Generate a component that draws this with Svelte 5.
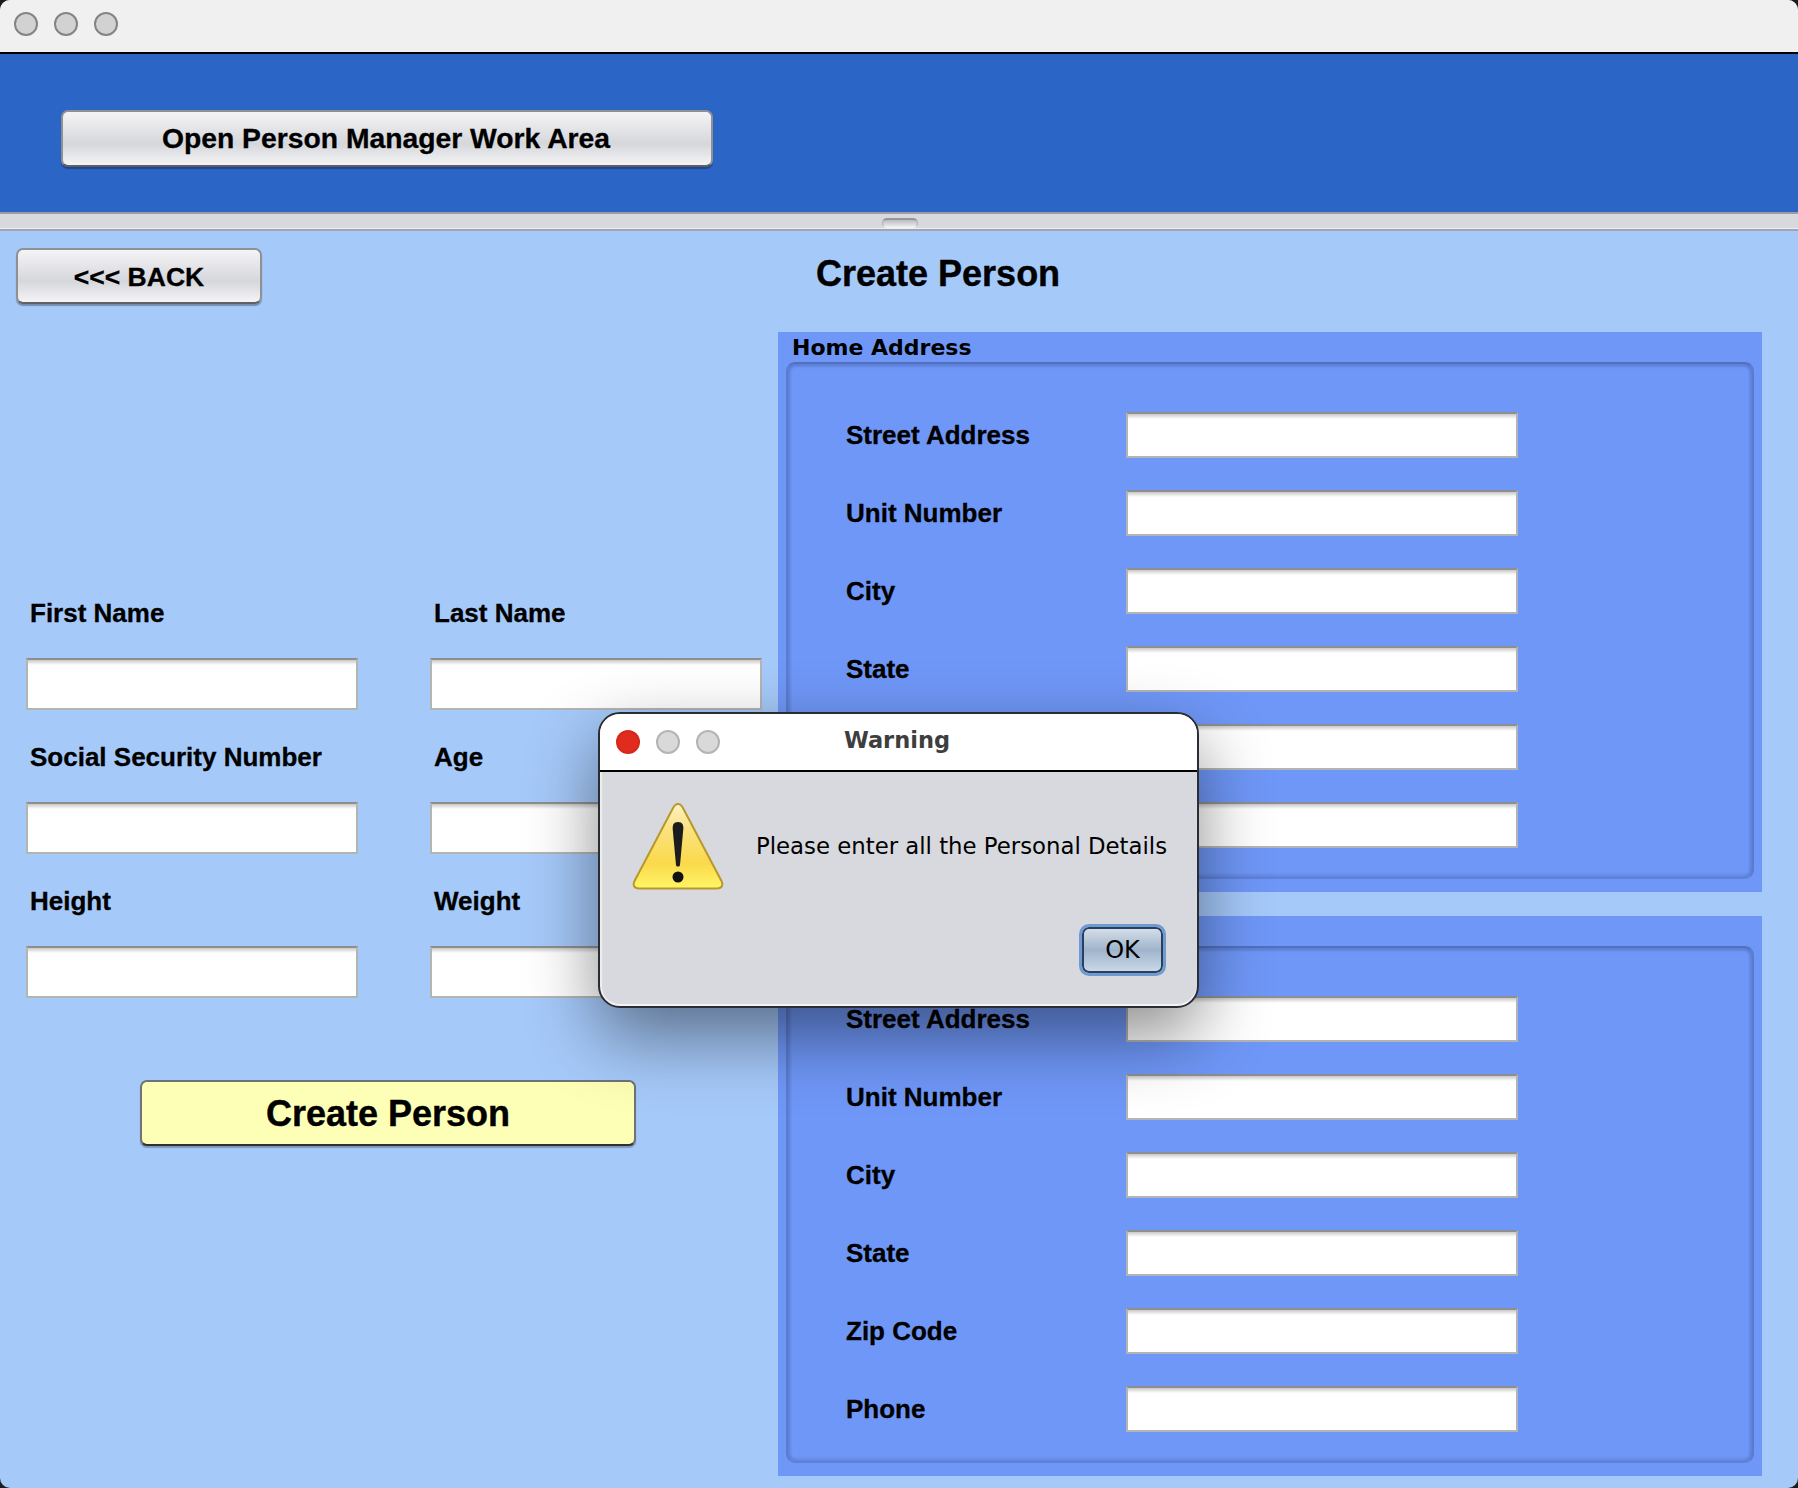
<script>
  const personal = [
    ['First Name', 'Last Name'],
    ['Social Security Number', 'Age'],
    ['Height', 'Weight']
  ];
  const panels = [
    { title: 'Home Address', rows: ['Street Address', 'Unit Number', 'City', 'State', 'Zip Code', 'Phone'] },
    { title: 'Work Address', rows: ['Street Address', 'Unit Number', 'City', 'State', 'Zip Code', 'Phone'] }
  ];
</script>

<div class="window">
  <div class="titlebar">
    <span class="light"></span>
    <span class="light"></span>
    <span class="light"></span>
  </div>

  <div class="header">
    <button class="btn open">Open Person Manager Work Area</button>
  </div>

  <div class="divider"><span class="grip"></span></div>

  <div class="content">
    <div class="left">
      <button class="btn back">&lt;&lt;&lt; BACK</button>
      <div class="form">
        {#each personal as row}
          {#each row as label}
            <div class="item">
              <span class="label">{label}</span>
              <div class="field"></div>
            </div>
          {/each}
        {/each}
      </div>
      <button class="create">Create Person</button>
    </div>

    <div class="right">
      <h1>Create Person</h1>
      {#each panels as panel}
        <section class="panel">
          <div class="legend">{panel.title}</div>
          <div class="inner">
            {#each panel.rows as row}
              <div class="row">
                <span class="label">{row}</span>
                <div class="field"></div>
              </div>
            {/each}
          </div>
        </section>
      {/each}
    </div>
  </div>

  <div class="dialog">
    <div class="dialog-title">
      <span class="light red"></span>
      <span class="light"></span>
      <span class="light"></span>
      <span class="dialog-name">Warning</span>
    </div>
    <div class="dialog-body">
      <svg class="warn" width="94" height="90" viewBox="0 0 94 90">
        <defs>
          <linearGradient id="warnFill" x1="0" y1="0" x2="0" y2="1">
            <stop offset="0" stop-color="#fdf2c4" />
            <stop offset="0.3" stop-color="#fbe27e" />
            <stop offset="0.7" stop-color="#fad94c" />
            <stop offset="1" stop-color="#fff666" />
          </linearGradient>
        </defs>
        <path d="M47 3 C44.500 3 43 4.800 41.500 8 L3.500 80 C1.500 84 3 87.500 8 87.500 L86 87.500 C91 87.500 92.500 84 90.500 80 L52.500 8 C51 4.800 49.500 3 47 3 Z" fill="url(#warnFill)" stroke="#b8982a" stroke-width="2" />
        <path d="M47 21 C42.500 21 41.500 24 41.700 28 L45 64 C45.200 66 48.800 66 49 64 L52.300 28 C52.500 24 51.500 21 47 21 Z" fill="#1c1c1c" />
        <circle cx="47" cy="76" r="5.500" fill="#111" />
      </svg>
      <span class="message">Please enter all the Personal Details</span>
    </div>
    <div class="dialog-actions">
      <button class="ok">OK</button>
    </div>
  </div>
</div>

<style>
  :global(body) {
    margin: 0;
    background: #1b1b1d;
  }
  .window {
    position: relative;
    width: 1798px;
    height: 1488px;
    overflow: hidden;
    display: flex;
    flex-direction: column;
    background: #a5c9f9;
    border-radius: 10px;
    font-family: "Liberation Sans", Arial, sans-serif;
    color: #000;
  }
  .titlebar {
    height: 40px;
    flex: none;
    display: flex;
    align-items: flex-start;
    gap: 16px;
    padding: 12px 0 0 14px;
    background: #f0f0f0;
    border-bottom: 2px solid #000;
  }
  .light {
    width: 24px;
    height: 24px;
    box-sizing: border-box;
    border-radius: 50%;
    background: #d2d2d2;
    border: 2px solid #848484;
  }
  .header {
    height: 158px;
    flex: none;
    box-sizing: border-box;
    padding: 56px 0 0 61px;
    background: #2b65c6;
  }
  .btn {
    display: block;
    box-sizing: border-box;
    padding: 0;
    font: bold 28.300px "Liberation Sans", Arial, sans-serif;
    -webkit-text-stroke: 0.3px #000;
    color: #000;
    border: 2px solid #8f9093;
    border-bottom-color: #5e6064;
    border-radius: 7px;
    background: linear-gradient(#f4f4f6, #d6d7db 60%, #f4f4f6);
    box-shadow: 0 2px 1px rgba(0, 0, 0, 0.3);
  }
  .open {
    width: 652px;
    height: 57px;
    padding-right: 2px;
  }
  .back {
    width: 246px;
    height: 56px;
    margin: 17px 0 0 16px;
    padding-top: 2px;
    font-size: 26.500px;
  }
  .divider {
    height: 19px;
    flex: none;
    box-sizing: border-box;
    display: flex;
    justify-content: center;
    background: #d8d9de;
    border-top: 2px solid #9a9ca2;
    border-bottom: 2px solid #a3a5aa;
    box-shadow: inset 0 -1px 0 #eceef0;
  }
  .grip {
    width: 36px;
    height: 10px;
    margin: 4px 0 0 2px;
    box-sizing: border-box;
    border: 1px solid #b0b2b7;
    border-top: 2px solid #94969c;
    border-bottom-color: #f3f4f6;
    border-radius: 5px;
    background: linear-gradient(#b9bbc0, #eceef0);
  }
  .content {
    flex: 1;
    display: grid;
    grid-template-columns: 778px 984px;
    align-items: start;
  }
  .left {
    display: flex;
    flex-direction: column;
  }
  .form {
    display: grid;
    grid-template-columns: 332px 332px;
    column-gap: 72px;
    row-gap: 32px;
    margin: 294px 0 0 26px;
  }
  .item {
    display: flex;
    flex-direction: column;
    gap: 30px;
  }
  .item .label {
    padding-left: 4px;
  }
  .label {
    font-size: 26px;
    font-weight: bold;
    line-height: 30px;
    -webkit-text-stroke: 0.3px #000;
  }
  .field {
    box-sizing: border-box;
    height: 52px;
    background: linear-gradient(#c9c9c9, #fff 5px);
    border: 2px solid #b4b4b4;
    border-top-color: #8e8e8e;
  }
  .create {
    width: 496px;
    height: 66px;
    margin: 82px 0 0 140px;
    padding: 2px 0 0;
    font: bold 36px "Liberation Sans", Arial, sans-serif;
    -webkit-text-stroke: 0.4px #000;
    color: #000;
    background: #feffb6;
    border: 2px solid #6f7278;
    border-bottom-color: #2e3034;
    border-radius: 7px;
    box-shadow: 0 2px 1px rgba(0, 0, 0, 0.25);
  }
  .right {
    display: flex;
    flex-direction: column;
    gap: 24px;
  }
  h1 {
    margin: 21px 0 12px 38px;
    font-size: 36px;
    line-height: 44px;
    font-weight: bold;
    -webkit-text-stroke: 0.4px #000;
  }
  .panel {
    box-sizing: border-box;
    height: 560px;
    padding: 0 8px 13px;
    display: flex;
    flex-direction: column;
    background: #6f97f7;
  }
  .legend {
    height: 30px;
    flex: none;
    padding: 2px 0 0 6px;
    box-sizing: border-box;
    font: bold 22px/28px "DejaVu Sans", sans-serif;
  }
  .inner {
    flex: 1;
    box-sizing: border-box;
    display: flex;
    flex-direction: column;
    gap: 32px;
    padding: 48px 0 0 58px;
    border: 2px solid #5b7ccd;
    border-top-color: #5270bd;
    border-bottom-color: #5f82d8;
    border-radius: 9px;
    box-shadow:
      inset 0 3px 2px rgba(80, 110, 190, 0.45),
      inset 3px 0 2px rgba(80, 110, 190, 0.35),
      inset -3px 0 2px rgba(80, 110, 190, 0.35),
      inset 0 -3px 2px rgba(80, 110, 190, 0.25);
  }
  .row {
    display: flex;
    align-items: center;
    height: 46px;
  }
  .row .label {
    width: 280px;
    flex: none;
  }
  .row .field {
    width: 392px;
    height: 46px;
  }
  .dialog {
    position: absolute;
    left: 598px;
    top: 712px;
    width: 601px;
    height: 296px;
    box-sizing: border-box;
    display: flex;
    flex-direction: column;
    background: #d8d9de;
    border: 2px solid #2a2d33;
    border-radius: 22px;
    overflow: hidden;
    box-shadow: 0 28px 70px rgba(0, 0, 0, 0.45), inset 0 -2px 1px #f4f4f6, inset 2px 0 1px #eeeef0;
    font-family: "DejaVu Sans", sans-serif;
  }
  .dialog-title {
    position: relative;
    height: 56px;
    flex: none;
    display: flex;
    align-items: center;
    gap: 16px;
    padding-left: 16px;
    background: #fff;
    border-bottom: 2px solid #000;
  }
  .dialog-title .light {
    background: #d9d9d9;
    border-color: #b4b4b4;
  }
  .dialog-title .red {
    background: #e02c1e;
    border-color: #d5281b;
  }
  .dialog-name {
    position: absolute;
    left: 0;
    right: 3px;
    top: 13px;
    text-align: center;
    font-size: 22.500px;
    font-weight: bold;
    color: #3e3e3e;
  }
  .dialog-body {
    display: flex;
    align-items: flex-start;
    padding: 29px 0 0 31px;
  }
  .warn {
    flex: none;
  }
  .message {
    margin: 30px 0 0 31px;
    font-size: 22.800px;
    line-height: 30px;
    white-space: nowrap;
  }
  .dialog-actions {
    display: flex;
    justify-content: flex-end;
    padding: 36px 34px 0 0;
  }
  .ok {
    width: 81px;
    height: 46px;
    box-sizing: border-box;
    padding: 0;
    font: 24px "DejaVu Sans", sans-serif;
    color: #000;
    background: linear-gradient(#d4dde8, #9fb4cb 50%, #c9d8e8);
    border: 2px solid #27405f;
    border-radius: 7px;
    outline: 3px solid #6f9bd0;
  }
</style>
